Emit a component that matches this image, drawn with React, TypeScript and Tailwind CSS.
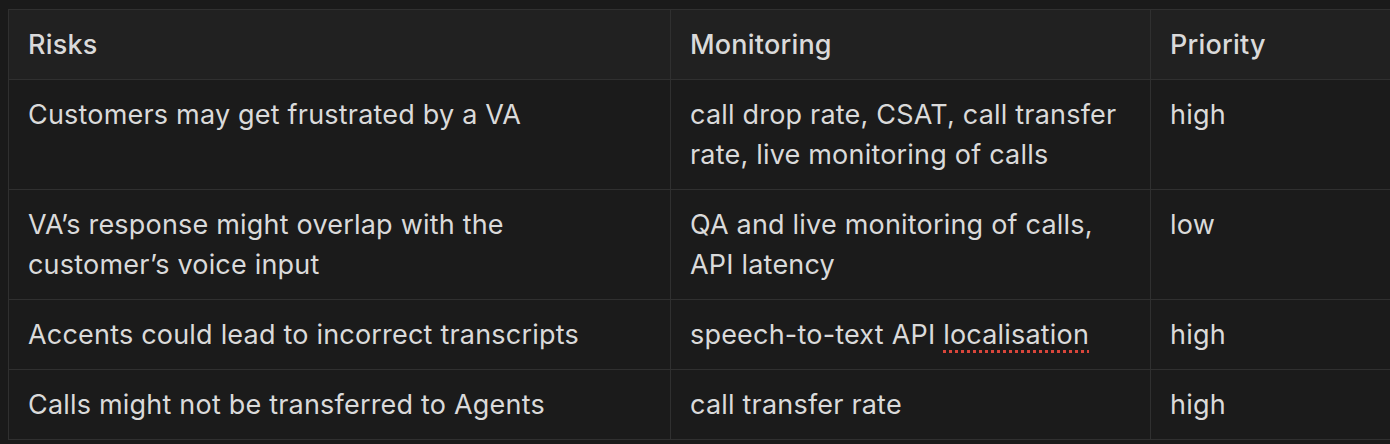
const rows = [
  {
    risk: "Customers may get frustrated by a VA",
    monitoring: "call drop rate, CSAT, call transfer rate, live monitoring of calls",
    priority: "high",
  },
  {
    risk: "VA’s response might overlap with the customer’s voice input",
    monitoring: "QA and live monitoring of calls, API latency",
    priority: "low",
  },
  {
    risk: "Accents could lead to incorrect transcripts",
    monitoring: "speech-to-text API",
    flagged: "localisation",
    priority: "high",
  },
  {
    risk: "Calls might not be transferred to Agents",
    monitoring: "call transfer rate",
    priority: "high",
  },
];

const cell = "border border-[#303030] px-[19px] py-[14.5px] align-top";

export default function App() {
  return (
    <div
      className="w-[1390px] h-[444px] overflow-hidden bg-[#1a1a1a] pt-[9px] pl-2 text-[#dadada]"
      style={{ fontFamily: "Inter, 'Noto Sans', sans-serif" }}
    >
      <table className="w-[1440px] table-fixed border-collapse text-[27px] leading-[40px] tracking-[0.2px]">
        <colgroup>
          <col className="w-[662px]" />
          <col className="w-[480px]" />
          <col />
        </colgroup>
        <thead>
          <tr className="bg-[#212121] text-left">
            <th className={`${cell} font-medium`}>Risks</th>
            <th className={`${cell} font-medium`}>Monitoring</th>
            <th className={`${cell} font-medium`}>Priority</th>
          </tr>
        </thead>
        <tbody>
          {rows.map((r) => (
            <tr key={r.risk} className="bg-[#1b1b1b]">
              <td className={cell}>{r.risk}</td>
              <td className={cell}>
                {r.monitoring}
                {r.flagged && (
                  <>
                    {" "}
                    <span className="underline decoration-dotted decoration-[#d9463b] decoration-[3px] underline-offset-[6px]">
                      {r.flagged}
                    </span>
                  </>
                )}
              </td>
              <td className={cell}>{r.priority}</td>
            </tr>
          ))}
        </tbody>
      </table>
    </div>
  );
}
